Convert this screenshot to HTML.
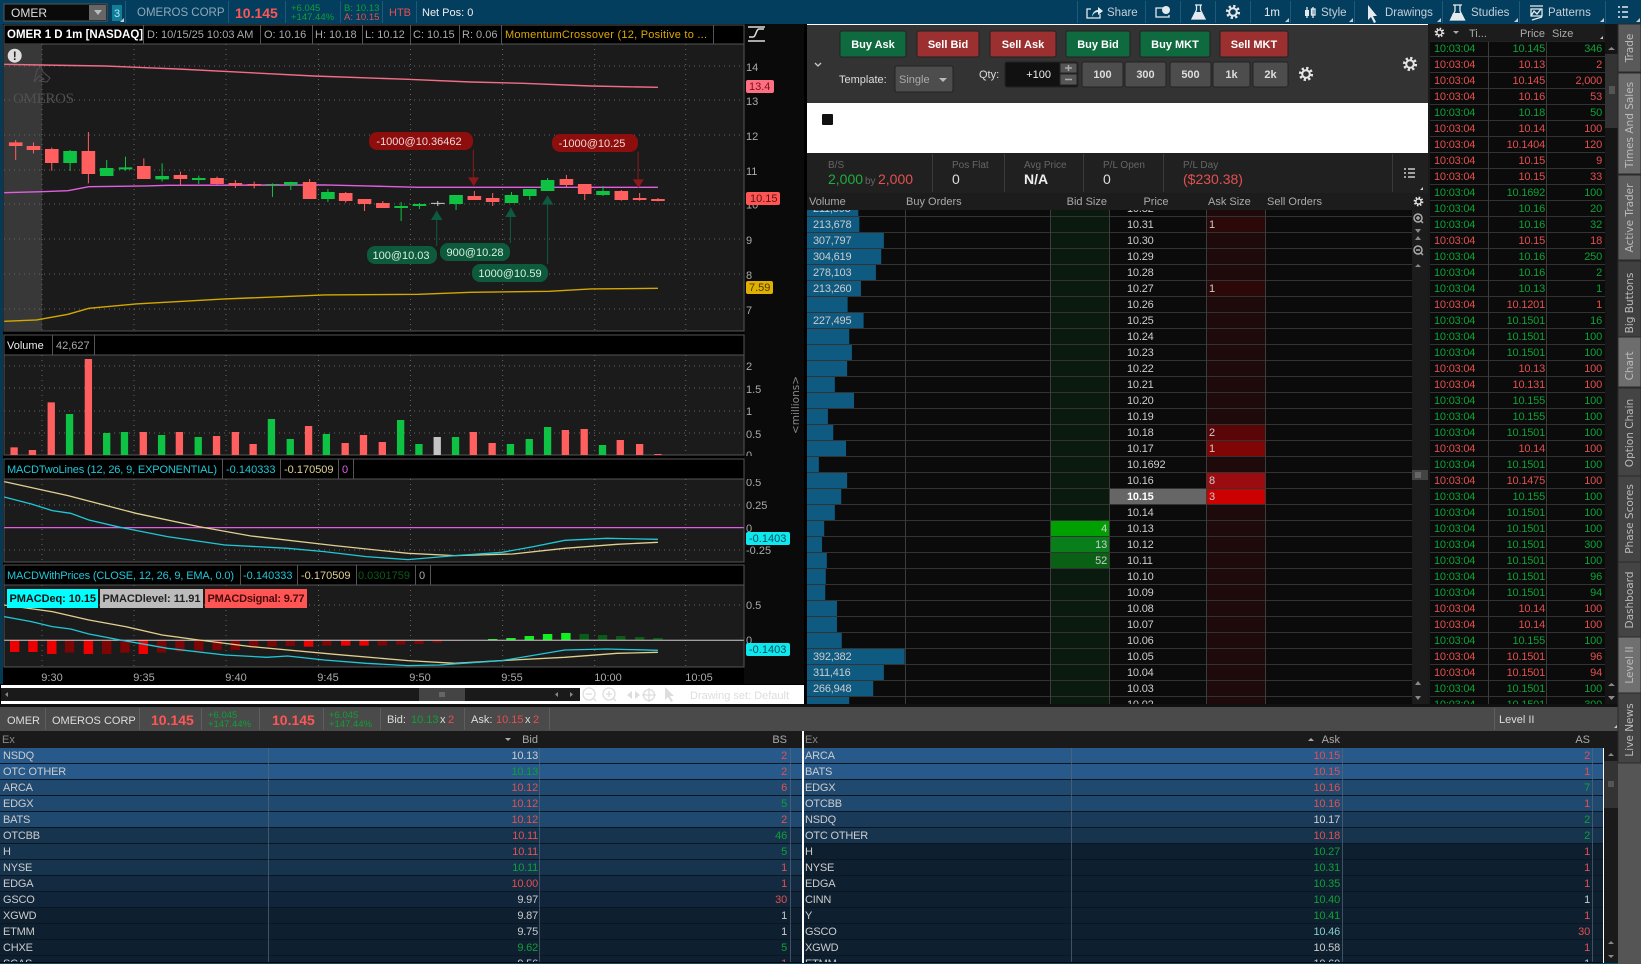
<!DOCTYPE html>
<html><head><meta charset="utf-8"><title>OMER</title>
<style>
html,body{margin:0;padding:0;background:#000;width:1641px;height:964px;overflow:hidden}
svg{display:block}
text{font-family:"Liberation Sans",sans-serif;font-size:11px;fill:#ccc}
.b{font-weight:bold}
.e text,text.e{text-anchor:end}
.m text,text.m{text-anchor:middle}
.g,.g text{fill:#0fa035}
.r,.r text{fill:#e35050}
.w,.w text{fill:#ccc}
.t text{letter-spacing:-.2px}
.ns{vector-effect:non-scaling-stroke;fill:none}
.n *{vector-effect:non-scaling-stroke}
.tab{font-family:"DejaVu Sans",sans-serif;font-size:10.5px;fill:#bbb;text-anchor:middle}
.top{font-size:11.5px;fill:#c5d0d8}
.ax{fill:#aaa}
.lbl{font-size:10px;fill:#666}
</style></head><body>
<svg width="1641" height="964" viewBox="0 0 1641 964" xmlns="http://www.w3.org/2000/svg">
<defs>
<pattern id="pd" patternUnits="userSpaceOnUse" x="0" y="216" width="10" height="16"><rect width="10" height="1" fill="#333"/></pattern>
<pattern id="pt" patternUnits="userSpaceOnUse" x="0" y="56" width="10" height="16"><rect width="10" height="1" fill="#333"/></pattern>
<pattern id="pl" patternUnits="userSpaceOnUse" x="0" y="763" width="10" height="16"><rect width="10" height="1" fill="#0a1622"/></pattern>
<clipPath id="cd"><rect x="807" y="210" width="605" height="494"/></clipPath>
<clipPath id="ct"><rect x="1430" y="41" width="175" height="663"/></clipPath>
<clipPath id="cl"><rect x="0" y="748" width="1618" height="214"/></clipPath>
<symbol id="gear" viewBox="-8 -8 16 16" overflow="visible"><circle r="5.8" fill="none" stroke="#e6e6e6" stroke-width="2.6" stroke-dasharray="2.3 2.25"/><circle r="3.8" fill="none" stroke="#e6e6e6" stroke-width="2"/></symbol>
</defs>

<rect x="0" y="24" width="3" height="660" fill="#043a56"/>

<!-- top bar -->
<rect width="1641" height="24" fill="#033e5e"/>
<rect x="4" y="4" width="103" height="17" fill="#0a0a0a" stroke="#555"/>
<rect x="89" y="5" width="17" height="15" fill="#666"/>
<path d="M94 10h8l-4 5z" fill="#bbb"/>
<text x="11" y="17" style="font-size:12px;fill:#ddd">OMER</text>
<rect x="112" y="5" width="10" height="16" fill="#0f7f95"/>
<text x="114" y="17" style="fill:#bdf">3</text>
<path d="M125.500 1V23M228.500 1V23M285.500 1V23M340.500 1V23M382.500 1V23M416.500 1V23M1077.500 1V23M1145.500 1V23M1180.500 1V23M1215.500 1V23M1250.500 1V23M1290.500 1V23M1354.500 1V23M1442.500 1V23M1519.500 1V23M1605.500 1V23" stroke="#1d5a7a"/>
<path d="M1289 18v4h-4zM1353 18v4h-4zM1441 18v4h-4zM1518 18v4h-4zM1604 18v4h-4zM1640 18v4h-4zM124 18v4h-4zM1603 36v3h-3zM1423 187v3h-3zM1617 725v3h-3z" fill="#ccc"/>
<text x="137" y="16" style="font-size:11.5px;fill:#8fa9b8">OMEROS CORP</text>
<text x="235" y="18" class="b r" style="font-size:14px;fill:#ff5555">10.145</text>
<text x="291" y="11" class="g" style="font-size:9.500px">+6.045</text>
<text x="291" y="20" class="g" style="font-size:9.500px">+147.44%</text>
<text x="344" y="11" class="g" style="font-size:9.500px">B: 10.13</text>
<text x="344" y="20" class="r" style="font-size:9.500px">A: 10.15</text>
<text x="389" y="16" class="r">HTB</text>
<text x="422" y="16" style="fill:#eee">Net Pos: 0</text>
<g fill="none" stroke="#e4eaee" stroke-width="1.300">
<path d="M1091 9h-4v9h13v-4"/>
<path d="M1163 8h-7v9h13v-2"/>
<path d="M1195 5h7M1196.500 5v5l-4.500 9h13l-4.500-9V5"/>
<path d="M1453 5h9M1455 5v6l-4.500 9h14l-4.500-9V5"/>
<path d="M1530 6h13M1531 9h11v7h-11zM1531 16l3-5 3 3 4-5M1532 20l10-3"/>
<path d="M1307 7v11M1313 7v11"/>
<rect x="1311.500" y="9" width="3.500" height="6"/>
</g>
<path d="M1092 17c0-4 3-7 6-7V7l5 4-5 4v-3c-3 0-5 2-6 5z" fill="#e4eaee"/>
<circle cx="1166" cy="10" r="4" fill="#e4eaee"/>
<path d="M1195 12l-3 7h13l-3-7zM1453 13l-3 7h14l-3-7z" fill="#e4eaee"/>
<path d="M1622 7h6M1622 12h6M1622 17h6M1618 7h2M1618 12h2M1618 17h2" stroke="#e4eaee" stroke-width="1.500"/>
<rect x="1305" y="10" width="4" height="6" fill="#e4eaee"/>
<use href="#gear" x="1225" y="4" width="16" height="16"/>
<path d="M1368 5v15l3-3 3 6 2-1-3-6h4z" fill="#e4eaee"/>
<text x="1107" y="16" class="top">Share</text>
<text x="1264" y="16" class="top" style="fill:#eee">1m</text>
<text x="1321" y="16" class="top">Style</text>
<text x="1385" y="16" class="top">Drawings</text>
<text x="1471" y="16" class="top">Studies</text>
<text x="1548" y="16" class="top">Patterns</text>

<!-- chart right gutter -->
<rect x="744" y="24" width="60" height="660" fill="#0a0a0a"/>

<!-- chart panels -->
<rect x="4" y="25" width="740" height="19" fill="#000" stroke="#555"/>
<rect x="4" y="44" width="740" height="287" fill="#1b1b1b" stroke="#555"/>
<rect x="4" y="44" width="38" height="287" fill="#383838"/>
<rect x="4" y="335" width="740" height="20" fill="#000" stroke="#555"/>
<rect x="4" y="355" width="740" height="100" fill="#1b1b1b" stroke="#555"/>
<rect x="4" y="459" width="740" height="20" fill="#000" stroke="#555"/>
<rect x="4" y="479" width="740" height="83" fill="#1b1b1b" stroke="#555"/>
<rect x="4" y="565" width="740" height="20" fill="#000" stroke="#555"/>
<rect x="4" y="585" width="740" height="82" fill="#1b1b1b" stroke="#555"/>
<path d="M42 44V331M134 44V331M226 44V331M318.500 44V331M410.500 44V331M502.600 44V331M594.700 44V331M685.700 44V331M42 355V455M134 355V455M226 355V455M318.500 355V455M410.500 355V455M502.600 355V455M594.700 355V455M685.700 355V455M42 479V562M134 479V562M226 479V562M318.500 479V562M410.500 479V562M502.600 479V562M594.700 479V562M685.700 479V562M42 585V667M134 585V667M226 585V667M318.500 585V667M410.500 585V667M502.600 585V667M594.700 585V667M685.700 585V667M4 66H744M4 100H744M4 135H744M4 170H744M4 204H744M4 239H744M4 274H744M4 309H744M4 366H744M4 388H744M4 411H744M4 433H744M4 505H744M4 550H744M4 605H744" stroke="#666" stroke-dasharray="1 4" fill="none"/>

<!-- chart header -->
<path d="M143.500 25V44M260.500 25V44M312.500 25V44M362.500 25V44M410.500 25V44M459.500 25V44M501.500 25V44M713.500 25V44M52.500 335V355M94.500 335V355M222.500 459V479M280.500 459V479M338.500 459V479M353.500 459V479M240.500 565V585M297.500 565V585M356.500 565V585M415.500 565V585M430.500 565V585" stroke="#555"/>
<text x="7" y="38" class="b" style="font-size:11.500px;fill:#fff">OMER 1 D 1m [NASDAQ]</text>
<text x="147" y="38" class="ax">D: 10/15/25 10:03 AM</text>
<text x="264" y="38" class="ax">O: 10.16</text>
<text x="315" y="38" class="ax">H: 10.18</text>
<text x="365" y="38" class="ax">L: 10.12</text>
<text x="413" y="38" class="ax">C: 10.15</text>
<text x="462" y="38" class="ax">R: 0.06</text>
<text x="505" y="38" textLength="202" style="fill:#e0a800">MomentumCrossover (12, Positive to ...</text>
<path d="M748 27h17M748 41h17M749 37h4c3 0 3-8 6-8h5" stroke="#ddd" fill="none" stroke-width="1.500"/>

<!-- watermark and warning -->
<path d="M37 70l4-4 2 6 7 6-3 4-8-1 5-2-5-3-5 6 3-12z" fill="none" stroke="#505050"/>
<text x="13" y="103" textLength="61" style="font-family:'Liberation Serif',serif;font-size:15px;fill:#505050">OMEROS</text>
<circle cx="14.700" cy="55.700" r="7" fill="#ddd"/>
<text x="14.700" y="60" class="m b" style="fill:#222;font-size:12px">!</text>

<!-- price chart -->
<g class="n" transform="scale(.523 .3333)">
<polyline class="ns" stroke="#f26d87" stroke-width="1.400" points="8,193 80,195 200,198 340,207 600,228 780,238 900,246 1000,250 1130,258 1258,262"/>
<polyline class="ns" stroke="#e060e0" stroke-width="1.400" points="8,578 80,575 130,572 170,560 280,558 320,556 620,555 700,558 800,562 1258,562"/>
<polyline class="ns" stroke="#d4a800" stroke-width="1.400" points="8,964 70,960 130,943 170,925 260,912 430,897 620,885 800,883 900,877 1050,874 1130,867 1258,865"/>
<path class="ns" stroke="#ff5f5f" d="M30 420V480M64 427V460M99 443V512M169 396V550M275 475V537M345 515V556M415 530V553M450 540V564M486 545V565M592 537V597M661 576V608M697 597V633M732 603V624M907 573V600M942 579V618M1083 525V561M1118 552V600M1188 570V602M1223 579V602M1258 594V604"/>
<path class="ns" stroke="#0ec244" d="M134 450V513M204 480V528M240 470V512M310 490V545M380 527V552M521 550V591M556 545V570M627 567V606M767 606V663M802 609V627M872 585V630M978 576V609M1013 567V600M1047 534V573M1153 558V588"/>
<path class="ns" stroke="#ccc" d="M837 603V618M824 610H850"/>
<path fill="#ff5f5f" d="M17 427h26V438h-26zM51 438h26V450h-26zM86 447h26V489h-26zM156 453h26V522h-26zM262 498h26V537h-26zM332 525h26V537h-26zM402 534h26V552h-26zM437 549h26V556h-26zM473 552h26V556h-26zM579 546h26V597h-26zM648 579h26V603h-26zM684 597h26V612h-26zM719 609h26V624h-26zM894 588h26V600h-26zM929 594h26V606h-26zM1070 537h26V555h-26zM1105 552h26V582h-26zM1175 573h26V600h-26zM1210 594h26V600h-26zM1245 597h26V603h-26z"/>
<path fill="#0ec244" d="M121 453h26V489h-26zM191 504h26V528h-26zM227 502h26V508h-26zM297 528h26V538h-26zM367 534h26V540h-26zM508 552h26V555h-26zM543 546h26V555h-26zM614 576h26V597h-26zM754 618h26V624h-26zM789 612h26V618h-26zM859 585h26V612h-26zM965 585h26V609h-26zM1000 567h26V588h-26zM1034 540h26V573h-26zM1140 573h26V585h-26z"/>
<path class="ns" stroke="#8a1a1a" d="M905 449V557M1220 455V562"/>
<path fill="#8a1a1a" d="M895 532h21l-10 26zM1210 538h21l-10 26z"/>
<path class="ns" stroke="#0f5a3e" d="M835 738V632M976 729V623M1047 792V588"/>
<path fill="#0f5a3e" d="M824 660h22l-11-28zM966 651h21l-10-28zM1036 614h22l-11-28z"/>
</g>
<rect x="369" y="132" width="104" height="18" rx="8" fill="#8e0d0d"/>
<rect x="552" y="134" width="86" height="18" rx="8" fill="#8e0d0d"/>
<rect x="367" y="246" width="70" height="18" rx="8" fill="#0d5a3d"/>
<rect x="440" y="243" width="70" height="18" rx="8" fill="#0d5a3d"/>
<rect x="472" y="264" width="76" height="18" rx="8" fill="#0d5a3d"/>
<g class="m" style="fill:#eee">
<text x="419" y="145" style="fill:#f0d8d8">-1000@10.36462</text>
<text x="592" y="147" style="fill:#f0d8d8">-1000@10.25</text>
<text x="401" y="259" style="fill:#d8f0e0">100@10.03</text>
<text x="475" y="256" style="fill:#d8f0e0">900@10.28</text>
<text x="510" y="277" style="fill:#d8f0e0">1000@10.59</text>
</g>

<!-- axis labels -->
<g class="ax">
<text x="746" y="71" class="ax">14</text><text x="746" y="105" class="ax">13</text><text x="746" y="140" class="ax">12</text><text x="746" y="175" class="ax">11</text><text x="746" y="208.500" class="ax">10</text><text x="746" y="244" class="ax">9</text><text x="746" y="279" class="ax">8</text><text x="746" y="314" class="ax">7</text>
<text x="746" y="370" class="ax">2</text><text x="746" y="393" class="ax">1.5</text><text x="746" y="415" class="ax">1</text><text x="746" y="438" class="ax">0.5</text><text x="746" y="459" class="ax">0</text>
<text x="746" y="486" class="ax">0.5</text><text x="746" y="509" class="ax">0.25</text><text x="746" y="532" class="ax">0</text><text x="746" y="554" class="ax">-0.25</text>
<text x="746" y="609" class="ax">0.5</text><text x="746" y="644" class="ax">0</text>
</g>
<rect x="745" y="456" width="45" height="4" fill="#0a0a0a"/>
<rect x="745" y="474" width="45" height="5" fill="#0a0a0a"/>
<rect x="746" y="80" width="28" height="13" rx="2" fill="#ff6f82"/><text x="749" y="90" style="fill:#7a1020">13.4</text>
<rect x="746" y="192" width="34" height="13" rx="2" fill="#ff5555"/><text x="750" y="202" style="fill:#601010">10.15</text>
<rect x="746" y="281" width="27" height="13" rx="2" fill="#e0b000"/><text x="749" y="291" style="fill:#4a3800">7.59</text>
<text transform="translate(799 405) rotate(-90)" class="m" style="font-family:'DejaVu Sans',sans-serif;font-size:10.500px;fill:#888">&lt;millions&gt;</text>

<!-- volume -->
<text x="7" y="349" style="fill:#eee">Volume</text><text x="56" y="349" class="ax">42,627</text>
<g transform="translate(0 335) scale(.523 .3333)" fill="none">
<path stroke-width="14" stroke="#ff5f5f" d="M27 337V360M62 345V360M98 202V360M169 72V360M274 291V360M343 291V360M414 303V360M450 291V360M484 327V360M590 273V360M660 324V360M695 300V360M731 321V360M905 291V360M941 324V360M1081 285V360M1117 282V360M1186 315V360M1223 327V360M1258 357V360"/>
<path stroke-width="14" stroke="#0ec244" d="M133 237V360M204 294V360M238 291V360M309 300V360M379 306V360M519 252V360M555 312V360M624 297V360M766 255V360M801 327V360M871 306V360M976 327V360M1012 312V360M1047 276V360M1152 330V360"/>
<path stroke-width="14" stroke="#c4c4c4" d="M836 306V360"/>
<!-- MACD -->
<polyline class="ns" stroke="#e060e0" stroke-width="1.300" points="8,578 1422,578"/>
<polyline class="ns" stroke="#e0d090" stroke-width="1.300" points="8,440 130,482 260,535 380,575 480,603 640,632 780,655 870,662 980,657 1080,640 1180,628 1258,622"/>
<polyline class="ns" stroke="#1fc8d8" stroke-width="1.300" points="8,486 60,507 100,527 135,535 170,555 230,577 320,605 430,630 550,640 620,650 700,665 780,674 870,662 960,652 1020,635 1080,616 1160,610 1258,613"/>
<!-- MACD with prices -->
<path stroke-width="18" stroke="#ee0000" d="M28 916V951M63 916V951M99 916V957M169 916V957M274 916V957M590 916V935M661 916V932M696 916V932"/>
<path stroke-width="18" stroke="#7c0505" d="M133 916V953M204 916V957M239 916V953M309 916V953M344 916V950M380 916V947M415 916V945M450 916V945M485 916V938M520 916V935M555 916V933M625 916V932M731 916V932M766 916V929M801 916V927M836 916V923M871 916V918"/>
<path stroke-width="18" stroke="#10f020" d="M942 916V912M977 916V909M1012 916V903M1047 916V897M1082 916V894"/>
<path stroke-width="18" stroke="#0a5a18" d="M1117 916V897M1152 916V900M1187 916V903M1223 916V906M1258 916V909"/>
<polyline class="ns" stroke="#ccc" stroke-width="1" points="8,916 1422,916"/>
<polyline class="ns" stroke="#e0d090" stroke-width="1.300" points="8,810 100,830 170,855 240,875 310,900 380,915 480,935 640,958 780,977 870,985 980,975 1080,967 1180,955 1258,952"/>
<polyline class="ns" stroke="#1fc8d8" stroke-width="1.300" points="8,845 60,860 100,875 135,882 170,897 230,915 320,940 430,960 510,967 550,963 620,975 700,985 780,992 840,990 960,977 1080,945 1160,942 1258,946"/>
</g>
<text x="7" y="473" textLength="210" style="fill:#1fc8d8">MACDTwoLines (12, 26, 9, EXPONENTIAL)</text>
<text x="226" y="473" style="fill:#1fc8d8">-0.140333</text><text x="284" y="473" style="fill:#e0d090">-0.170509</text><text x="342" y="473" style="fill:#e060e0">0</text>
<text x="7" y="579" textLength="227" style="fill:#1fc8d8">MACDWithPrices (CLOSE, 12, 26, 9, EMA, 0.0)</text>
<text x="243" y="579" style="fill:#1fc8d8">-0.140333</text><text x="301" y="579" style="fill:#e0d090">-0.170509</text><text x="358" y="579" style="fill:#0b5a18">0.0301759</text><text x="419" y="579" class="ax">0</text>
<rect x="746" y="532" width="44" height="13" rx="2" fill="#10e8f0"/><text x="749" y="542" style="fill:#045058">-0.1403</text>
<rect x="746" y="643" width="44" height="13" rx="2" fill="#10e8f0"/><text x="749" y="653" style="fill:#045058">-0.1403</text>
<rect x="7" y="589" width="91" height="19" fill="#0ff"/><text x="9.500" y="602" textLength="86.500" class="b" style="fill:#111">PMACDeq: 10.15</text>
<rect x="100" y="589" width="103" height="19" fill="#bcbcbc"/><text x="102.500" y="602" textLength="98" class="b" style="fill:#222">PMACDlevel: 11.91</text>
<rect x="205" y="589" width="102" height="19" fill="#ff5555"/><text x="207.500" y="602" textLength="97" class="b" style="fill:#4a0a0a">PMACDsignal: 9.77</text>
<g class="m"><text x="52" y="681" class="ax">9:30</text><text x="144" y="681" class="ax">9:35</text><text x="236" y="681" class="ax">9:40</text><text x="328" y="681" class="ax">9:45</text><text x="420" y="681" class="ax">9:50</text><text x="512" y="681" class="ax">9:55</text><text x="608" y="681" class="ax">10:00</text><text x="699" y="681" class="ax">10:05</text></g>

<!-- scrollbar strip -->
<rect x="1" y="685" width="803" height="19" fill="#fff"/>
<rect x="1" y="688" width="579" height="13" fill="#1a1a1a"/>
<rect x="419" y="688" width="46" height="13" fill="#444"/>
<path d="M440 692v5M442 692v5M444 692v5" stroke="#888"/>
<path d="M8 692l-3 2.500 3 2.500zM558 692l-3 2.500 3 2.500zM570 692l3 2.500-3 2.500z" fill="#888"/>
<g fill="none" stroke="#ddd" stroke-width="1.300"><circle cx="589" cy="694" r="6"/><circle cx="609" cy="694" r="6"/><circle cx="649" cy="695" r="5.500"/><path d="M586 694h6M606 694h6M609 691v6M593 698l3 3M613 698l3 3M649 688v14M642 695h14"/></g>
<path d="M627 695l5-4v8zM640 695l-5-4v8z" fill="#ddd"/><path d="M665 687v13l3-3 3 5 2-1-3-5h4z" fill="#ddd"/>
<text x="690" y="699" style="fill:#ddd">Drawing set: Default</text>

<!-- DOM controls -->
<rect x="807" y="24" width="621" height="79" fill="#333"/>
<rect x="807" y="24" width="621" height="1" fill="#fff"/>
<g stroke="#222" stroke-width="1">
<rect x="840" y="31" width="66" height="26" rx="2" fill="#0f6b3f"/><rect x="917" y="31" width="62" height="26" rx="2" fill="#9c2f2f"/><rect x="990" y="31" width="66" height="26" rx="2" fill="#9c2f2f"/><rect x="1066" y="31" width="64" height="26" rx="2" fill="#0f6b3f"/><rect x="1140" y="31" width="70" height="26" rx="2" fill="#0f6b3f"/><rect x="1220" y="31" width="68" height="26" rx="2" fill="#9c2f2f"/>
<rect x="895" y="66" width="58" height="26" rx="2" fill="#4d4d4d"/><rect x="1005" y="62" width="73" height="25" rx="2" fill="#111"/>
<rect x="1082" y="62" width="41" height="25" rx="2" fill="#4d4d4d"/><rect x="1125" y="62" width="41" height="25" rx="2" fill="#4d4d4d"/><rect x="1170" y="62" width="41" height="25" rx="2" fill="#4d4d4d"/><rect x="1213" y="62" width="37" height="25" rx="2" fill="#4d4d4d"/><rect x="1253" y="62" width="35" height="25" rx="2" fill="#4d4d4d"/>
<rect x="1060" y="63" width="17" height="10" fill="#555"/><rect x="1060" y="74" width="17" height="11" fill="#555"/>
</g>
<g class="m b"><text x="873" y="48" style="fill:#fff">Buy Ask</text><text x="948" y="48" style="fill:#fff">Sell Bid</text><text x="1023" y="48" style="fill:#fff">Sell Ask</text><text x="1098" y="48" style="fill:#fff">Buy Bid</text><text x="1175" y="48" style="fill:#fff">Buy MKT</text><text x="1254" y="48" style="fill:#fff">Sell MKT</text>
<text x="1102.500" y="78" style="fill:#ddd">100</text><text x="1145.500" y="78" style="fill:#ddd">300</text><text x="1190.500" y="78" style="fill:#ddd">500</text><text x="1231.500" y="78" style="fill:#ddd">1k</text><text x="1270.500" y="78" style="fill:#ddd">2k</text></g>
<path d="M815 63l3 3 3-3" stroke="#ccc" stroke-width="1.300" fill="none"/>
<text x="839" y="83" style="fill:#ddd">Template:</text><text x="899" y="83" class="ax">Single</text><path d="M939 78h8l-4 4z" fill="#bbb"/>
<text x="979" y="78" style="fill:#ddd">Qty:</text><text x="1051" y="78" class="e" style="fill:#eee">+100</text>
<path d="M1065 68h7M1068.500 65v6M1065 79.500h7" stroke="#aaa" stroke-width="1.500"/>
<use href="#gear" x="1298" y="66" width="16" height="16"/><use href="#gear" x="1402" y="56" width="16" height="16"/>

<!-- white area -->
<rect x="807" y="103" width="621" height="50" fill="#fff"/>
<rect x="822" y="114" width="11" height="11" rx="1" fill="#111"/>

<!-- stats -->
<rect x="807" y="153" width="621" height="40" fill="#202020"/>
<path d="M932.500 154V192M1004.500 154V192M1083.500 154V192M1163.500 154V192M1392.500 154V192" stroke="#3a3a3a"/>
<text x="828" y="168" class="lbl">B/S</text><text x="952" y="168" class="lbl">Pos Flat</text><text x="1024" y="168" class="lbl">Avg Price</text><text x="1103" y="168" class="lbl">P/L Open</text><text x="1183" y="168" class="lbl">P/L Day</text>
<text x="828" y="184" style="font-size:14px;fill:#1fae3c">2,000</text><text x="865" y="184" style="font-size:10px;fill:#666">by</text><text x="878" y="184" style="font-size:14px;fill:#e35050">2,000</text>
<text x="952" y="184" style="font-size:14px;fill:#ddd">0</text><text x="1024" y="184" class="b" style="font-size:14px;fill:#eee">N/A</text><text x="1103" y="184" style="font-size:14px;fill:#ddd">0</text><text x="1183" y="184" style="font-size:14px;fill:#e35050">($230.38)</text>
<path d="M1408 169h7M1408 173h7M1408 177h7M1404 169h2M1404 173h2M1404 177h2" stroke="#ccc" stroke-width="1.500"/>
<path d="M1423 187v3h-3z" fill="#ccc"/>

<!-- DOM table -->
<rect x="807" y="193" width="621" height="17" fill="#1c1c1c"/>
<text x="809" y="205" class="ax">Volume</text><text x="906" y="205" class="ax">Buy Orders</text><text x="1107" y="205" class="e ax">Bid Size</text><text x="1156" y="205" class="m ax">Price</text><text x="1208" y="205" class="ax">Ask Size</text><text x="1267" y="205" class="ax">Sell Orders</text>
<rect x="807" y="210" width="605" height="494" fill="#0b0b0b"/>
<rect x="1050" y="210" width="59" height="494" fill="#0a1a0e"/>
<rect x="1206" y="210" width="59" height="494" fill="#1e0a0a"/>
<rect x="1412" y="193" width="16" height="511" fill="#1c1c1c"/>
<g clip-path="url(#cd)">
<g transform="translate(805 0) scale(.533 1)" fill="#0e5a80">
<rect x="2" y="201" width="98" height="15"/><rect x="2" y="217" width="100" height="15"/><rect x="2" y="233" width="146" height="15"/><rect x="2" y="249" width="141" height="15"/><rect x="2" y="265" width="131" height="15"/><rect x="2" y="281" width="103" height="15"/><rect x="2" y="297" width="78" height="15"/><rect x="2" y="313" width="108" height="15"/><rect x="2" y="329" width="81" height="15"/><rect x="2" y="345" width="86" height="15"/><rect x="2" y="361" width="77" height="15"/><rect x="2" y="377" width="54" height="15"/><rect x="2" y="393" width="90" height="15"/><rect x="2" y="409" width="41" height="15"/><rect x="2" y="425" width="51" height="15"/><rect x="2" y="441" width="75" height="15"/><rect x="2" y="457" width="24" height="15"/><rect x="2" y="473" width="77" height="15"/><rect x="2" y="489" width="66" height="15"/><rect x="2" y="505" width="54" height="15"/><rect x="2" y="521" width="34" height="15"/><rect x="2" y="537" width="30" height="15"/><rect x="2" y="553" width="39" height="15"/><rect x="2" y="569" width="37" height="15"/><rect x="2" y="585" width="36" height="15"/><rect x="2" y="601" width="58" height="15"/><rect x="2" y="617" width="58" height="15"/><rect x="2" y="633" width="67" height="15"/><rect x="2" y="649" width="185" height="15"/><rect x="2" y="665" width="146" height="15"/><rect x="2" y="681" width="126" height="15"/><rect x="2" y="697" width="81" height="15"/>
</g>
<rect x="1050" y="521" width="59" height="15" fill="#00a000"/><rect x="1050" y="537" width="59" height="15" fill="#087f1a"/><rect x="1050" y="553" width="59" height="15" fill="#0a6015"/>
<rect x="1206" y="217" width="59" height="15" fill="#2c0808"/><rect x="1206" y="281" width="59" height="15" fill="#2c0808"/><rect x="1206" y="425" width="59" height="15" fill="#5a0508"/><rect x="1206" y="441" width="59" height="15" fill="#800505"/><rect x="1206" y="473" width="59" height="15" fill="#9a0c10"/><rect x="1206" y="489" width="59" height="15" fill="#cc0000"/>
<rect x="1109" y="489" width="97" height="15" fill="#666"/>
<rect x="807" y="210" width="605" height="494" fill="url(#pd)"/>
<path d="M905.500 193V704M1050.500 193V704M1109.500 193V704M1206.500 193V704M1265.500 193V704" stroke="#3c3c3c"/>
<g class="t" style="fill:#ccc">
<text x="813" y="212">211,393</text><text x="813" y="228">213,678</text><text x="813" y="244">307,797</text><text x="813" y="260">304,619</text><text x="813" y="276">278,103</text><text x="813" y="292">213,260</text><text x="813" y="324">227,495</text><text x="813" y="660">392,382</text><text x="813" y="676">311,416</text><text x="813" y="692">266,948</text>
<text x="1127" y="212">10.32</text><text x="1127" y="228">10.31</text><text x="1127" y="244">10.30</text><text x="1127" y="260">10.29</text><text x="1127" y="276">10.28</text><text x="1127" y="292">10.27</text><text x="1127" y="308">10.26</text><text x="1127" y="324">10.25</text><text x="1127" y="340">10.24</text><text x="1127" y="356">10.23</text><text x="1127" y="372">10.22</text><text x="1127" y="388">10.21</text><text x="1127" y="404">10.20</text><text x="1127" y="420">10.19</text><text x="1127" y="436">10.18</text><text x="1127" y="452">10.17</text><text x="1127" y="468">10.1692</text><text x="1127" y="484">10.16</text><text x="1127" y="500" class="b" style="fill:#fff">10.15</text><text x="1127" y="516">10.14</text><text x="1127" y="532">10.13</text><text x="1127" y="548">10.12</text><text x="1127" y="564">10.11</text><text x="1127" y="580">10.10</text><text x="1127" y="596">10.09</text><text x="1127" y="612">10.08</text><text x="1127" y="628">10.07</text><text x="1127" y="644">10.06</text><text x="1127" y="660">10.05</text><text x="1127" y="676">10.04</text><text x="1127" y="692">10.03</text><text x="1127" y="708">10.02</text>
<text x="1209" y="228">1</text><text x="1209" y="292">1</text><text x="1209" y="436">2</text><text x="1209" y="452">1</text><text x="1209" y="484">8</text><text x="1209" y="500">3</text>
<text x="1107" y="532" class="e">4</text><text x="1107" y="548" class="e">13</text><text x="1107" y="564" class="e">52</text>
</g>
</g>
<use href="#gear" x="1413" y="196" width="11" height="11"/>
<g fill="none" stroke="#aaa" stroke-width="1.500"><circle cx="1418" cy="218" r="4"/><circle cx="1418" cy="250" r="4"/><path d="M1416 218h4M1418 216v4M1416 250h4M1421 221l2 2M1421 253l2 2"/></g>
<path d="M1415 229h6l-3 4zM1415 240h6l-3-4zM1415 267h6l-3-3zM1415 685h6l-3-4zM1415 696h6l-3 4z" fill="#888"/>
<rect x="1412" y="470" width="16" height="10" fill="#444"/><path d="M1415 473h6M1415 475h6M1415 477h6" stroke="#888"/>

<!-- Times & Sales -->
<rect x="1428" y="24" width="2" height="680" fill="#1a1a1a"/>
<rect x="1430" y="24" width="175" height="17" fill="#1c1c1c"/>
<rect x="1430" y="41" width="175" height="663" fill="#0b0b0b"/>
<rect x="1605" y="24" width="13" height="680" fill="#151515"/>
<rect x="1605" y="54" width="13" height="74" fill="#333"/>
<path d="M1609 87h6M1609 89h6M1609 91h6M1609 93h6" stroke="#777"/>
<path d="M1608 50h7l-3.500-3zM1608 686h7l-3.500-3zM1608 696h7l-3.500 4z" fill="#888"/>
<use href="#gear" x="1434" y="27" width="11" height="11"/><path d="M1453 31h6l-3 3z" fill="#aaa"/>
<text x="1469" y="37" class="ax">Ti...</text><text x="1545" y="37" class="e ax">Price</text><text x="1552" y="37" class="ax">Size</text>
<path d="M1603 36v3h-3z" fill="#ccc"/>
<g clip-path="url(#ct)">
<rect x="1430" y="41" width="175" height="663" fill="url(#pt)"/>
<path d="M1488.500 24V704M1546.500 24V704" stroke="#3c3c3c"/>
<g class="t">
<g class="g"><text x="1434" y="52">10:03:04</text><text x="1434" y="116">10:03:04</text><text x="1434" y="196">10:03:04</text><text x="1434" y="212">10:03:04</text><text x="1434" y="228">10:03:04</text><text x="1434" y="260">10:03:04</text><text x="1434" y="276">10:03:04</text><text x="1434" y="292">10:03:04</text><text x="1434" y="324">10:03:04</text><text x="1434" y="340">10:03:04</text><text x="1434" y="356">10:03:04</text><text x="1434" y="404">10:03:04</text><text x="1434" y="420">10:03:04</text><text x="1434" y="436">10:03:04</text><text x="1434" y="468">10:03:04</text><text x="1434" y="500">10:03:04</text><text x="1434" y="516">10:03:04</text><text x="1434" y="532">10:03:04</text><text x="1434" y="548">10:03:04</text><text x="1434" y="564">10:03:04</text><text x="1434" y="580">10:03:04</text><text x="1434" y="596">10:03:04</text><text x="1434" y="644">10:03:04</text><text x="1434" y="692">10:03:04</text><text x="1434" y="708">10:03:04</text></g>
<g class="r"><text x="1434" y="68">10:03:04</text><text x="1434" y="84">10:03:04</text><text x="1434" y="100">10:03:04</text><text x="1434" y="132">10:03:04</text><text x="1434" y="148">10:03:04</text><text x="1434" y="164">10:03:04</text><text x="1434" y="180">10:03:04</text><text x="1434" y="244">10:03:04</text><text x="1434" y="308">10:03:04</text><text x="1434" y="372">10:03:04</text><text x="1434" y="388">10:03:04</text><text x="1434" y="452">10:03:04</text><text x="1434" y="484">10:03:04</text><text x="1434" y="612">10:03:04</text><text x="1434" y="628">10:03:04</text><text x="1434" y="660">10:03:04</text><text x="1434" y="676">10:03:04</text></g>
<g class="e g">
<text x="1545" y="52">10.145</text><text x="1602" y="52">346</text>
<text x="1545" y="116">10.18</text><text x="1602" y="116">50</text>
<text x="1545" y="196">10.1692</text><text x="1602" y="196">100</text>
<text x="1545" y="212">10.16</text><text x="1602" y="212">20</text>
<text x="1545" y="228">10.16</text><text x="1602" y="228">32</text>
<text x="1545" y="260">10.16</text><text x="1602" y="260">250</text>
<text x="1545" y="276">10.16</text><text x="1602" y="276">2</text>
<text x="1545" y="292">10.13</text><text x="1602" y="292">1</text>
<text x="1545" y="324">10.1501</text><text x="1602" y="324">16</text>
<text x="1545" y="340">10.1501</text><text x="1602" y="340">100</text>
<text x="1545" y="356">10.1501</text><text x="1602" y="356">100</text>
<text x="1545" y="404">10.155</text><text x="1602" y="404">100</text>
<text x="1545" y="420">10.155</text><text x="1602" y="420">100</text>
<text x="1545" y="436">10.1501</text><text x="1602" y="436">100</text>
<text x="1545" y="468">10.1501</text><text x="1602" y="468">100</text>
<text x="1545" y="500">10.155</text><text x="1602" y="500">100</text>
<text x="1545" y="516">10.1501</text><text x="1602" y="516">100</text>
<text x="1545" y="532">10.1501</text><text x="1602" y="532">100</text>
<text x="1545" y="548">10.1501</text><text x="1602" y="548">300</text>
<text x="1545" y="564">10.1501</text><text x="1602" y="564">100</text>
<text x="1545" y="580">10.1501</text><text x="1602" y="580">96</text>
<text x="1545" y="596">10.1501</text><text x="1602" y="596">94</text>
<text x="1545" y="644">10.155</text><text x="1602" y="644">100</text>
<text x="1545" y="692">10.1501</text><text x="1602" y="692">100</text>
<text x="1545" y="708">10.1501</text><text x="1602" y="708">300</text>
</g>
<g class="e r">
<text x="1545" y="68">10.13</text><text x="1602" y="68">2</text>
<text x="1545" y="84">10.145</text><text x="1602" y="84">2,000</text>
<text x="1545" y="100">10.16</text><text x="1602" y="100">53</text>
<text x="1545" y="132">10.14</text><text x="1602" y="132">100</text>
<text x="1545" y="148">10.1404</text><text x="1602" y="148">120</text>
<text x="1545" y="164">10.15</text><text x="1602" y="164">9</text>
<text x="1545" y="180">10.15</text><text x="1602" y="180">33</text>
<text x="1545" y="244">10.15</text><text x="1602" y="244">18</text>
<text x="1545" y="308">10.1201</text><text x="1602" y="308">1</text>
<text x="1545" y="372">10.13</text><text x="1602" y="372">100</text>
<text x="1545" y="388">10.131</text><text x="1602" y="388">100</text>
<text x="1545" y="452">10.14</text><text x="1602" y="452">100</text>
<text x="1545" y="484">10.1475</text><text x="1602" y="484">100</text>
<text x="1545" y="612">10.14</text><text x="1602" y="612">100</text>
<text x="1545" y="628">10.14</text><text x="1602" y="628">100</text>
<text x="1545" y="660">10.1501</text><text x="1602" y="660">96</text>
<text x="1545" y="676">10.1501</text><text x="1602" y="676">94</text>
</g>
</g>
</g>
<path d="M1430 41.500H1605" stroke="#222"/>

<!-- bottom panel -->
<rect x="0" y="704" width="1641" height="3" fill="#111"/>
<rect x="0" y="707" width="1618" height="24" fill="#4a4a4a"/>
<path d="M45.500 708V730M139.500 708V730M201.500 708V730M259.500 708V730M323.500 708V730M380.500 708V730M464.500 708V730M549.500 708V730M1494.500 708V730" stroke="#5e5e5e"/>
<path d="M1617 725v3h-3z" fill="#ccc"/>
<text x="7" y="724" style="fill:#ddd">OMER</text><text x="52" y="724" style="fill:#ddd">OMEROS CORP</text>
<text x="151" y="725" class="b" style="font-size:14px;fill:#ff5555">10.145</text><text x="272" y="725" class="b" style="font-size:14px;fill:#ff5555">10.145</text>
<text x="208" y="718" class="g" style="font-size:9.500px">+6.045</text><text x="208" y="727" class="g" style="font-size:9.500px">+147.44%</text>
<text x="329" y="718" class="g" style="font-size:9.500px">+6.045</text><text x="329" y="727" class="g" style="font-size:9.500px">+147.44%</text>
<text x="387" y="723" style="fill:#ddd">Bid:</text><text x="411" y="723" class="g">10.13</text><text x="440" y="723" style="fill:#ddd">x</text><text x="448" y="723" class="r">2</text>
<text x="471" y="723" style="fill:#ddd">Ask:</text><text x="496" y="723" class="r">10.15</text><text x="525" y="723" style="fill:#ddd">x</text><text x="533" y="723" class="r">2</text>
<text x="1499" y="723" style="fill:#ddd">Level II</text>

<rect x="0" y="731" width="1618" height="17" fill="#1a1a1a"/>
<text x="2" y="743" class="ax" style="fill:#888">Ex</text><path d="M505 738h6l-3 3z" fill="#aaa"/><text x="538" y="743" class="e ax">Bid</text><text x="787" y="743" class="e ax">BS</text>
<text x="805" y="743" class="ax" style="fill:#888">Ex</text><path d="M1308 741h6l-3-3z" fill="#aaa"/><text x="1340" y="743" class="e ax">Ask</text><text x="1590" y="743" class="e ax">AS</text>

<g clip-path="url(#cl)">
<rect x="0" y="748" width="802" height="32" fill="#27598a"/><rect x="0" y="780" width="802" height="48" fill="#20496f"/><rect x="0" y="828" width="802" height="48" fill="#17344f"/><rect x="0" y="876" width="802" height="16" fill="#142a40"/><rect x="0" y="892" width="802" height="16" fill="#11253a"/><rect x="0" y="908" width="802" height="56" fill="#0e1f30"/>
<rect x="804" y="748" width="799" height="32" fill="#27598a"/><rect x="804" y="780" width="799" height="32" fill="#20496f"/><rect x="804" y="812" width="799" height="16" fill="#1a3a5a"/><rect x="804" y="828" width="799" height="16" fill="#17344f"/><rect x="804" y="844" width="799" height="120" fill="#0e1f30"/>
<rect x="0" y="748" width="1603" height="216" fill="url(#pl)"/>
<path d="M268.500 731V964M539.500 731V964M790.500 731V964M1071.500 731V964M1342.500 731V964M1592.500 731V964" stroke="#55677a" stroke-opacity=".7"/>
<g class="t">
<text x="3" y="759">NSDQ</text><text x="3" y="775">OTC OTHER</text><text x="3" y="791">ARCA</text><text x="3" y="807">EDGX</text><text x="3" y="823">BATS</text><text x="3" y="839">OTCBB</text><text x="3" y="855">H</text><text x="3" y="871">NYSE</text><text x="3" y="887">EDGA</text><text x="3" y="903">GSCO</text><text x="3" y="919">XGWD</text><text x="3" y="935">ETMM</text><text x="3" y="951">CHXE</text><text x="3" y="967">SCAS</text>
<text x="538" y="759" class="e">10.13</text><text x="538" y="775" class="e g">10.13</text><text x="538" y="791" class="e r">10.12</text><text x="538" y="807" class="e r">10.12</text><text x="538" y="823" class="e r">10.12</text><text x="538" y="839" class="e r">10.11</text><text x="538" y="855" class="e r">10.11</text><text x="538" y="871" class="e g">10.11</text><text x="538" y="887" class="e r">10.00</text><text x="538" y="903" class="e">9.97</text><text x="538" y="919" class="e">9.87</text><text x="538" y="935" class="e">9.75</text><text x="538" y="951" class="e g">9.62</text><text x="538" y="967" class="e">9.56</text>
<text x="787" y="759" class="e r">2</text><text x="787" y="775" class="e r">2</text><text x="787" y="791" class="e r">6</text><text x="787" y="807" class="e g">5</text><text x="787" y="823" class="e r">2</text><text x="787" y="839" class="e g">46</text><text x="787" y="855" class="e g">5</text><text x="787" y="871" class="e r">1</text><text x="787" y="887" class="e r">1</text><text x="787" y="903" class="e r">30</text><text x="787" y="919" class="e">1</text><text x="787" y="935" class="e">1</text><text x="787" y="951" class="e g">5</text><text x="787" y="967" class="e r">1</text>
<text x="805" y="759">ARCA</text><text x="805" y="775">BATS</text><text x="805" y="791">EDGX</text><text x="805" y="807">OTCBB</text><text x="805" y="823">NSDQ</text><text x="805" y="839">OTC OTHER</text><text x="805" y="855">H</text><text x="805" y="871">NYSE</text><text x="805" y="887">EDGA</text><text x="805" y="903">CINN</text><text x="805" y="919">Y</text><text x="805" y="935">GSCO</text><text x="805" y="951">XGWD</text><text x="805" y="967">ETMM</text>
<text x="1340" y="759" class="e r">10.15</text><text x="1340" y="775" class="e r">10.15</text><text x="1340" y="791" class="e r">10.16</text><text x="1340" y="807" class="e r">10.16</text><text x="1340" y="823" class="e">10.17</text><text x="1340" y="839" class="e r">10.18</text><text x="1340" y="855" class="e g">10.27</text><text x="1340" y="871" class="e g">10.31</text><text x="1340" y="887" class="e g">10.35</text><text x="1340" y="903" class="e g">10.40</text><text x="1340" y="919" class="e g">10.41</text><text x="1340" y="935" class="e" style="fill:#8cc">10.46</text><text x="1340" y="951" class="e">10.58</text><text x="1340" y="967" class="e">10.60</text>
<text x="1590" y="759" class="e r">2</text><text x="1590" y="775" class="e r">1</text><text x="1590" y="791" class="e g">7</text><text x="1590" y="807" class="e r">1</text><text x="1590" y="823" class="e g">2</text><text x="1590" y="839" class="e g">2</text><text x="1590" y="855" class="e r">1</text><text x="1590" y="871" class="e r">1</text><text x="1590" y="887" class="e r">1</text><text x="1590" y="903" class="e">1</text><text x="1590" y="919" class="e r">1</text><text x="1590" y="935" class="e r">30</text><text x="1590" y="951" class="e r">1</text><text x="1590" y="967" class="e">1</text>
</g>
</g>
<rect x="802" y="731" width="2" height="233" fill="#fff"/>
<rect x="1603" y="748" width="1" height="216" fill="#fff"/>
<rect x="1604" y="731" width="14" height="233" fill="#1a1a1a"/>
<rect x="1604" y="761" width="14" height="47" fill="#333"/>
<path d="M1608 782h6M1608 784h6M1608 786h6" stroke="#777"/>
<path d="M1608 756h6l-3-3zM1608 944h6l-3-3zM1608 955h6l-3 3z" fill="#888"/>
<rect x="0" y="963" width="1641" height="1" fill="#045070"/>

<!-- right rail -->
<rect x="1618" y="24" width="23" height="940" fill="#555"/>
<g stroke="#2a2a2a">
<rect x="1618" y="24" width="23" height="48" fill="#5a5a5a"/>
<rect x="1618" y="73" width="23" height="101" fill="#6a6a6a"/>
<rect x="1618" y="175" width="23" height="85" fill="#5e5e5e"/>
<rect x="1618" y="261" width="23" height="76" fill="#404040"/>
<rect x="1618" y="337" width="23" height="50" fill="#6d6d6d"/>
<rect x="1618" y="388" width="23" height="88" fill="#444"/>
<rect x="1618" y="476" width="23" height="86" fill="#444"/>
<rect x="1618" y="562" width="23" height="75" fill="#444"/>
<rect x="1618" y="637" width="23" height="56" fill="#707070"/>
<rect x="1618" y="693" width="23" height="70" fill="#444"/>
</g>
<text transform="translate(1633 48) rotate(-90)" class="tab">Trade</text>
<text transform="translate(1633 125) rotate(-90)" class="tab">Times And Sales</text>
<text transform="translate(1633 218) rotate(-90)" class="tab">Active Trader</text>
<text transform="translate(1633 303) rotate(-90)" class="tab">Big Buttons</text>
<text transform="translate(1633 366) rotate(-90)" class="tab">Chart</text>
<text transform="translate(1633 433) rotate(-90)" class="tab">Option Chain</text>
<text transform="translate(1633 519) rotate(-90)" class="tab">Phase Scores</text>
<text transform="translate(1633 600) rotate(-90)" class="tab">Dashboard</text>
<text transform="translate(1633 665) rotate(-90)" class="tab">Level II</text>
<text transform="translate(1633 730) rotate(-90)" class="tab">Live News</text>
</svg>
</body></html>
